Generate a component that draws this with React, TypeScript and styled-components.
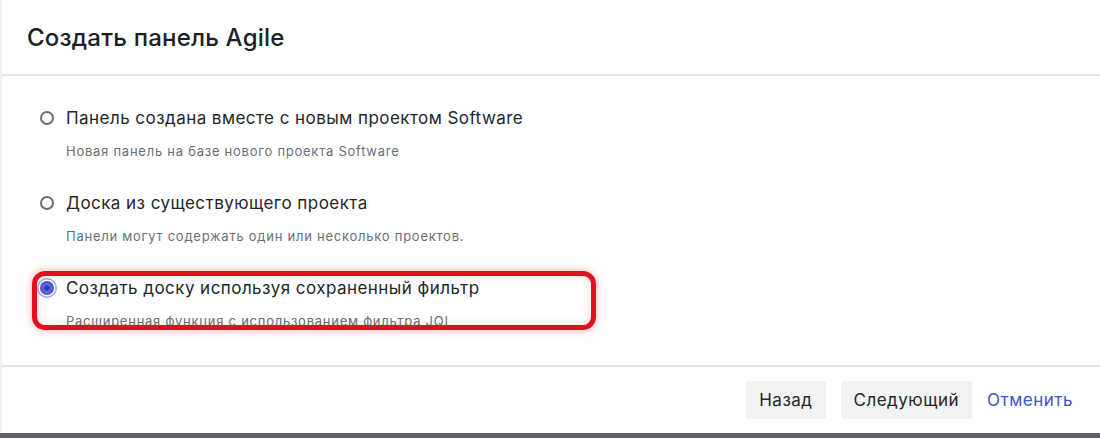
import { createGlobalStyle, styled } from "styled-components"

const Global = createGlobalStyle`
body{
    margin: 0;
    background: #ffffff;
    font-family: Inter, "Noto Sans", sans-serif;
    color: #1d2125;
}
`

interface IOption {
    label: string
    hint: string
    checked?: boolean
}

const options: IOption[] = [
    { label: 'Панель создана вместе с новым проектом Software', hint: 'Новая панель на базе нового проекта Software' },
    { label: 'Доска из существующего проекта', hint: 'Панели могут содержать один или несколько проектов.' },
    { label: 'Создать доску используя сохраненный фильтр', hint: 'Расширенная функция с использованием фильтра JQL', checked: true },
]

export default function App(){
    return(
        <>
            <Global />
            <Page>
                <Dialog>
                    <Header>
                        <Title>Создать панель Agile</Title>
                    </Header>
                    <Body>
                        {options.map((o) => (
                            <Option key={o.label}>
                                <LabelRow>
                                    <Radio $checked={!!o.checked} />
                                    <Label>{o.label}</Label>
                                </LabelRow>
                                <Hint>{o.hint}</Hint>
                            </Option>
                        ))}
                    </Body>
                    <Footer>
                        <Button>Назад</Button>
                        <Button>Следующий</Button>
                        <LinkButton>Отменить</LinkButton>
                    </Footer>
                    <Highlight />
                </Dialog>
                <Below />
            </Page>
        </>
    )
}

const Page = styled.div`
width: 1100px;
height: 438px;
overflow: hidden;
display: flex;
flex-direction: column;
`
const Dialog = styled.div`
position: relative;
height: 433px;
display: flex;
flex-direction: column;
background: #ffffff;
border-left: 2px solid #f1f2f5;
`
const Header = styled.div`
height: 74px;
display: flex;
align-items: center;
padding-left: 25px;
border-bottom: 2px solid #e4e5e9;
`
const Title = styled.div`
font-size: 24px;
font-weight: 500;
color: #1d2125;
letter-spacing: 0.2px;
`
const Body = styled.div`
flex: 1;
padding: 30px 0 0 38px;
display: flex;
flex-direction: column;
gap: 32px;
`
const Option = styled.div`
display: flex;
flex-direction: column;
`
const LabelRow = styled.div`
display: flex;
align-items: center;
gap: 12px;
height: 24px;
`
const Radio = styled.div<{ $checked: boolean }>`
width: 14px;
height: 14px;
flex-shrink: 0;
box-sizing: border-box;
border-radius: 50%;
border: 2px solid ${p => p.$checked ? '#4c5bd4' : '#6b6e76'};
background: ${p => p.$checked ? 'radial-gradient(circle, #2f3fae 0 2.5px, #5a68d8 3px)' : '#ffffff'};
box-shadow: ${p => p.$checked ? '0 0 0 1.5px #ffffff, 0 0 0 3px #a2a8e6' : 'none'};
`
const Label = styled.div`
font-size: 17px;
letter-spacing: 0.45px;
color: #22262b;
`
const Hint = styled.div`
margin-top: 13px;
padding-left: 26px;
font-size: 13px;
letter-spacing: 0.75px;
line-height: 16px;
color: #6b6e76;
`
const Footer = styled.div`
height: 66px;
border-top: 2px solid #e4e5e9;
display: flex;
align-items: center;
justify-content: flex-end;
gap: 15px;
padding-right: 27px;
`
const Button = styled.button`
height: 38px;
padding: 0 13px;
border: none;
border-radius: 3px;
background: #f1f2f4;
font-family: inherit;
font-size: 17px;
letter-spacing: 0.5px;
color: #22262b;
`
const LinkButton = styled.button`
height: 38px;
padding: 0;
border: none;
background: none;
font-family: inherit;
font-size: 17px;
letter-spacing: 0.5px;
color: #3f51c8;
`
const Highlight = styled.div`
position: absolute;
left: 30px;
top: 271px;
width: 564px;
height: 59px;
box-sizing: border-box;
border: 5px solid #e0101c;
border-radius: 13px;
box-shadow: 0 0 8px rgba(224, 16, 28, 0.35), inset 0 0 10px rgba(224, 16, 28, 0.15);
`
const Below = styled.div`
height: 5px;
background: #5f6064;
`
